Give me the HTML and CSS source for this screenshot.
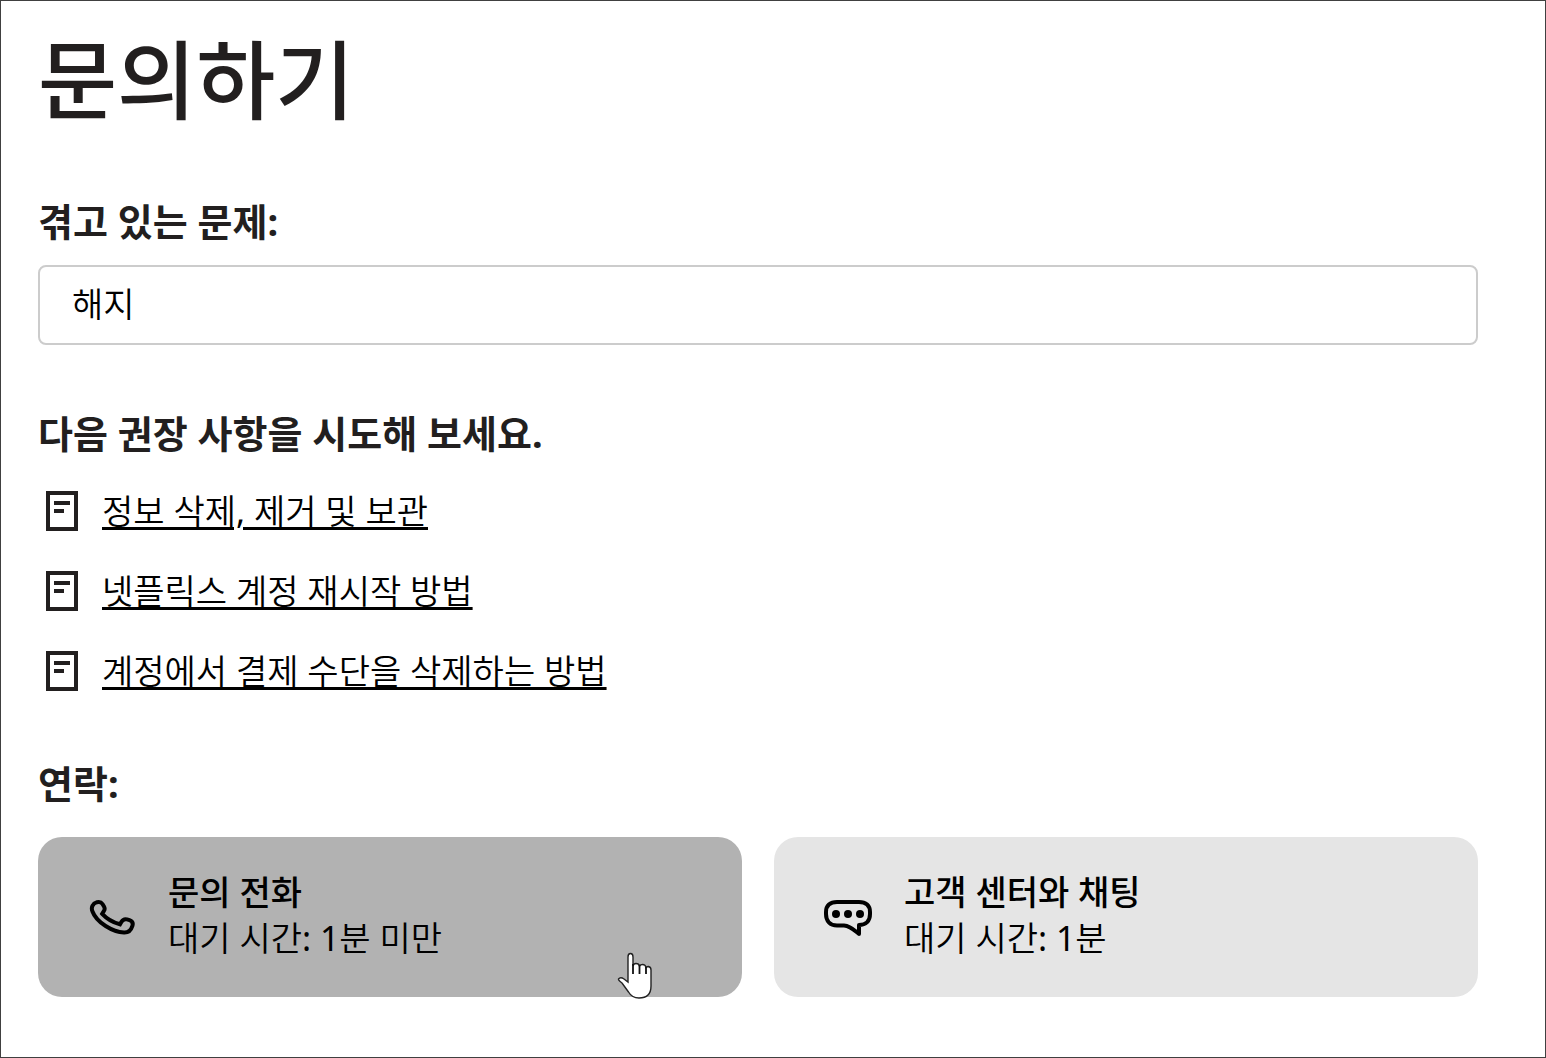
FILE: index.html
```html
<!DOCTYPE html>
<html lang="ko">
<head>
<meta charset="utf-8">
<meta name="viewport" content="width=device-width, initial-scale=1">
<title>문의하기</title>
<link rel="stylesheet" href="styles.css">
</head>
<body>
<svg class="sprite" aria-hidden="true">
  <symbol id="icon-article" viewBox="0 0 32 40">
    <path d="M2 2H30V38H2Z" fill="none" stroke="currentColor" stroke-width="4"/>
    <path d="M8 12H24M8 20H18" fill="none" stroke="currentColor" stroke-width="4"/>
  </symbol>
</svg>
<main class="contact">
  <h1 class="page-title">문의하기</h1>

  <section class="issue">
    <label class="heading" for="issue">겪고 있는 문제:</label>
    <input class="issue-input" id="issue" type="text" value="해지">
  </section>

  <section class="tips">
    <h2 class="heading">다음 권장 사항을 시도해 보세요.</h2>
    <ul class="tip-list">
      <li class="tip"><svg class="tip-icon" aria-hidden="true"><use href="#icon-article"/></svg><a class="tip-link" href="#">정보 삭제, 제거 및 보관</a></li>
      <li class="tip"><svg class="tip-icon" aria-hidden="true"><use href="#icon-article"/></svg><a class="tip-link" href="#">넷플릭스 계정 재시작 방법</a></li>
      <li class="tip"><svg class="tip-icon" aria-hidden="true"><use href="#icon-article"/></svg><a class="tip-link" href="#">계정에서 결제 수단을 삭제하는 방법</a></li>
    </ul>
  </section>

  <section class="reach">
    <h2 class="heading">연락:</h2>
    <div class="cards">
      <button class="card card-hover" type="button">
        <svg class="card-icon" viewBox="0 0 48 48" aria-hidden="true">
          <path d="M4.500 18.500C2.800 14.500 4.500 10.500 9 9.200C11.500 8.600 13.300 9.200 14.500 11L16 13.500C17 15.200 16.900 16.600 15.800 18.200L14.200 20.800C18.500 25.500 25.500 29.500 32 31.300L33.500 28.800C34.800 26.600 36.800 25.800 39 26.400L41.500 27.200C44.400 28.200 45.200 30.300 44.400 32.800C43.100 37 40.500 39.700 36 39.500C25 39.200 8.500 29.500 4.500 18.500Z" fill="none" stroke="currentColor" stroke-width="4"/>
        </svg>
        <span class="card-text"><strong class="card-title">문의 전화</strong><span>대기 시간: 1분 미만</span></span>
        <svg class="pointer" viewBox="0 0 36 48" aria-hidden="true">
          <path d="M11 30V5Q11 1.500 13.500 1.500Q16 1.500 16 5V14Q16.500 11.500 19 11.500Q22 11.500 22.500 14Q23.500 12.500 25.500 12.500Q28.500 12.500 29 15.500Q30 14.500 31.500 14.500Q34 15 34 18V34Q34 46 22 46Q15 46 11.500 40L5 31Q1 28 1.500 27Q3.500 24.500 7 27Z" fill="#fff" stroke="#222" stroke-width="1.400"/>
          <path d="M16 12V22M22.500 13V22M29 15V22" fill="none" stroke="#111" stroke-width="1.800"/>
        </svg>
      </button>
      <button class="card" type="button">
        <svg class="card-icon" viewBox="0 0 48 48" aria-hidden="true">
          <path d="M13 9H35C42 9 46 12.500 46 19V21C46 28 42 32 35 32V41C31 38 27 33 20 32.500H13C6 32.500 2 28 2 21V19C2 12.500 6 9 13 9Z" fill="none" stroke="currentColor" stroke-width="4" stroke-linejoin="round"/>
          <circle cx="12" cy="21" r="4"/><circle cx="24" cy="21" r="4"/><circle cx="36" cy="21" r="4"/>
        </svg>
        <span class="card-text"><strong class="card-title">고객 센터와 채팅</strong><span>대기 시간: 1분</span></span>
      </button>
    </div>
  </section>
</main>
</body>
</html>
```
FILE: styles.css
```css
* {
  box-sizing: border-box;
}

body {
  min-height: 100vh;
  margin: 0;
  border: 1px solid #404040;
  background: #fff;
  color: #221f1f;
  font-family: "Noto Sans", "Noto Sans CJK KR DemiLight", "Noto Sans CJK KR", sans-serif;
  font-size: 34px;
  font-weight: 400;
}

.sprite {
  position: absolute;
  width: 0;
  height: 0;
}

.contact {
  display: flex;
  flex-direction: column;
  gap: 64px;
  padding: 18px 67px 60px 37px;
}

.page-title {
  margin: 0;
  font-family: "Noto Sans CJK KR", sans-serif;
  font-size: 86px;
  font-weight: 500;
  line-height: 114px;
}

.heading {
  display: block;
  margin: 0;
  font-family: "Noto Sans", "Noto Sans CJK KR", sans-serif;
  font-size: 38px;
  font-weight: 700;
  line-height: 48px;
}

.issue-input {
  display: block;
  width: 100%;
  height: 80px;
  margin-top: 20px;
  padding: 0 32px 6px;
  border: 2px solid #ccc;
  border-radius: 8px;
  background: #fff;
  color: #000;
  font: inherit;
}

.tip-list {
  display: flex;
  flex-direction: column;
  gap: 32px;
  margin: 30px 0 0;
  padding: 0 8px;
  list-style: none;
}

.tip {
  display: flex;
  align-items: center;
  gap: 24px;
  line-height: 48px;
}

.tip-icon {
  flex: none;
  width: 32px;
  height: 40px;
}

.tip-link {
  color: #000;
  text-decoration-thickness: 3px;
  text-underline-offset: 3px;
}

.cards {
  display: grid;
  grid-template-columns: 1fr 1fr;
  gap: 32px;
  margin-top: 30px;
}

.card {
  position: relative;
  display: flex;
  align-items: center;
  gap: 32px;
  height: 160px;
  padding: 0 50px;
  border: 0;
  border-radius: 24px;
  background: #e5e5e5;
  color: #000;
  font: inherit;
  line-height: 46px;
  text-align: left;
}

.card-hover {
  background: #b2b2b2;
  cursor: pointer;
}

.card-icon {
  flex: none;
  width: 48px;
  height: 48px;
}

.card-text {
  display: flex;
  flex-direction: column;
  padding-bottom: 4px;
}

.card-title {
  font-family: "Noto Sans", "Noto Sans CJK KR", sans-serif;
  font-weight: 500;
}

.pointer {
  position: absolute;
  right: 89px;
  bottom: -3px;
  width: 36px;
  height: 48px;
}
```
